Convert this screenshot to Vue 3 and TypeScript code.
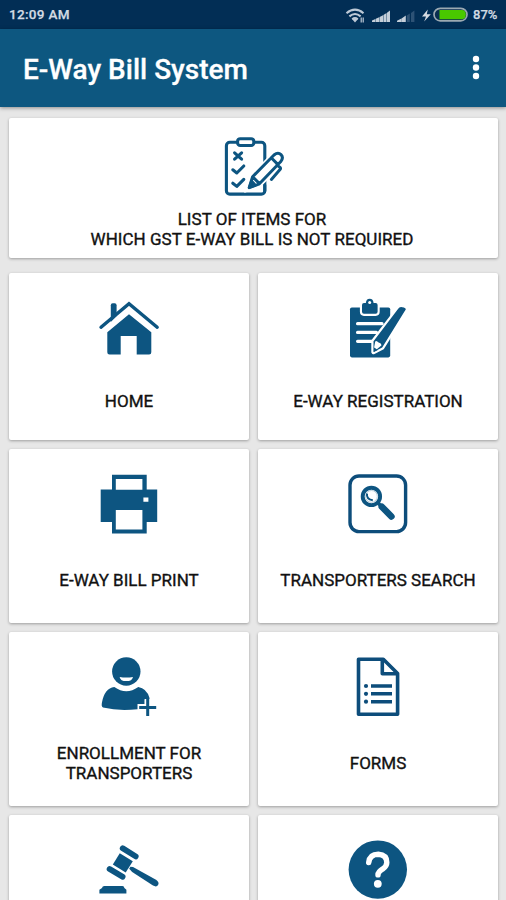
<script setup lang="ts">
type IconName = 'home' | 'register' | 'print' | 'search' | 'enroll' | 'forms' | 'gavel' | 'help'
interface Tile { icon: IconName; lines: string[] }

const tiles: Tile[] = [
  { icon: 'home', lines: ['HOME'] },
  { icon: 'register', lines: ['E-WAY REGISTRATION'] },
  { icon: 'print', lines: ['E-WAY BILL PRINT'] },
  { icon: 'search', lines: ['TRANSPORTERS SEARCH'] },
  { icon: 'enroll', lines: ['ENROLLMENT FOR', 'TRANSPORTERS'] },
  { icon: 'forms', lines: ['FORMS'] },
  { icon: 'gavel', lines: [] },
  { icon: 'help', lines: [] },
]
</script>

<template>
  <div class="screen">
    <div class="status">
      <span class="time">12:09 AM</span>
      <svg class="signals" width="126" height="18" viewBox="0 0 126 18">
        <g fill="none" stroke="#bdc9d6" stroke-width="2.1">
          <path d="M1.5 7.2Q10 .2 18.5 7.2M4.4 10.4Q10 5.6 15.6 10.4M7.2 13.3Q10 11 12.8 13.3" />
        </g>
        <path d="M7.2 13.2L10 16.4l2.8-3.2Q10 11.6 7.2 13.2zM15.6 11.5h1.2v5h-1.2zM17.6 11.5h1.2v5h-1.2z" fill="#bdc9d6" />
        <path d="M27 16v-1.6l3.4-1.4V16zM30.8 16v-3.3l3.4-1.5V16zM34.6 16v-5l3.4-1.8V16zM38.4 16V9l3.2-2V16zM42 16V6.7L45 4.4V16z" fill="#c4ced9" />
        <path d="M52 16v-1.2l4.4-2.2V16zM56.6 16v-3.6l4.2-3V16z" fill="#c4ced9" />
        <path d="M61.8 16V9.4l3-1.8V16zM66 16V7l3.4-2.4V16z" fill="#2d5275" />
        <path d="M82.8 3.4L77 10.4h4l-1.8 5.2 6.6-7.4h-4z" fill="#d5dbe2" />
        <rect x="89" y="2.4" width="33" height="12.4" rx="6.2" fill="#082d50" stroke="#9ba9b2" stroke-width="1.7" />
        <path d="M94.5 4H117q3.8 0 3.8 4.6t-3.8 4.6H94.5z" fill="#49c900" />
      </svg>
      <span class="percent">87%</span>
    </div>

    <header class="appbar">
      <h1>E-Way Bill System</h1>
      <svg class="more" width="8" height="26" viewBox="0 0 8 26">
        <g fill="#fff"><circle cx="4" cy="4" r="3.2" /><circle cx="4" cy="12.5" r="3.2" /><circle cx="4" cy="21" r="3.2" /></g>
      </svg>
    </header>

    <main class="content">
      <section class="card banner">
        <svg class="icon banner-icon" viewBox="0 0 60 60">
          <g fill="none" stroke="#0d5581" stroke-width="3.1" stroke-linecap="round" stroke-linejoin="round">
            <rect x="2.4" y="5.3" width="38.4" height="51.8" rx="3.4" />
            <rect x="13.6" y="1.7" width="16.2" height="6.8" rx="2.6" fill="#fff" />
            <path d="M10.6 15.8l7 6.4m0-6.4l-7 6.4M8.8 32.8l4 3.2 7-7M8.8 46.2l4 3.2 7-7" />
          </g>
          <path d="M25 51l3.6-11L50 18q4-3.6 7.2-.4t-.2 7.2L35.6 47z" fill="#fff" stroke="#fff" stroke-width="6" />
          <g fill="none" stroke="#0d5581" stroke-width="3" stroke-linecap="round" stroke-linejoin="round">
            <path d="M25.2 50.7l3.4-11L50 18q4-3.4 7-.4t-.4 7.2L35.4 46.8zM28.8 40l6.4 6.4M47.2 20.8l6.6 6.6M53 28l3 2.4q1 1 0 2.2l-8.6 9.8M40.8 48v6" />
            <path d="M25.4 50.4l2.2-6 3.6 3.8z" fill="#0d5581" />
          </g>
        </svg>
        <p class="banner-label"><span>LIST OF ITEMS FOR</span><span>WHICH GST E-WAY BILL IS NOT REQUIRED</span></p>
      </section>

      <div class="grid">
        <section v-for="tile in tiles" :key="tile.icon" class="card tile">
          <svg v-if="tile.icon === 'home'" class="icon" viewBox="0 0 60 60">
            <path d="M11.8 24V7.2q0-1.9 1.9-1.9h2q1.9 0 1.9 1.9V18z" fill="#0d5581" />
            <path d="M2 29.2L30 5.6l28.2 23.6" fill="none" stroke="#0d5581" stroke-width="3.4" stroke-linecap="round" />
            <path d="M30 16.3L8.3 34.2v20q0 2.2 2.2 2.2h11.2V38h16v18.4h12.4q2.2 0 2.2-2.2v-20z" fill="#0d5581" />
          </svg>

          <svg v-else-if="tile.icon === 'register'" class="icon" viewBox="0 0 60 60">
            <rect x="2" y="9.4" width="40.2" height="50" rx="1.8" fill="#0d5581" />
            <path d="M14 7q0-2 2-2h1.8q.4-4.3 3.9-4.3T25.6 5h2q2 0 2 2v6.8q0 2-2 2H16q-2 0-2-2z" fill="#0d5581" stroke="#fff" stroke-width="4.2" paint-order="stroke" />
            <circle cx="21.7" cy="4.6" r="1.5" fill="#fff" />
            <path d="M9.6 25.7H34M9.6 34.4h18.8M9.6 43.3h14" stroke="#fff" stroke-width="3.3" stroke-linecap="round" />
            <path d="M50.2 10.8l1.2-1.4q1.5-1 4.5.2t1.2 3L34.2 49.6 25.5 54V43.2z" fill="#0d5581" stroke="#fff" stroke-width="4.4" stroke-linejoin="round" paint-order="stroke" />
            <path d="M27.2 43.4q1.4-1.2 3.4 1.2 2.8.5 2.8 3l-6.8 5.4-.8-2z" fill="#fff" />
            <path d="M25.8 49.2v4.7l4.1-1.8z" fill="#0d5581" />
          </svg>

          <svg v-else-if="tile.icon === 'print'" class="icon" viewBox="0 0 60 60">
            <path d="M13 .8h34.7v14.7h10.5V48H47.7v11.4H13V48H1.7V15.5H13z" fill="#0d5581" />
            <path d="M16.8 5h26.6v10.7H16.8zM16.8 36h26.6v19.4H16.8zM44.4 23.4h5v4.4h-5z" fill="#fff" />
          </svg>

          <svg v-else-if="tile.icon === 'search'" class="icon" viewBox="0 0 60 60">
            <rect x="2" y="2" width="55.6" height="55.6" rx="9" fill="none" stroke="#0d4d7b" stroke-width="3.4" />
            <path d="M29.5 28.6l14.3 14" stroke="#0d5581" stroke-width="3.5" />
            <path d="M33.8 32.7l9.6 9.8" stroke="#0d5581" stroke-width="6.6" stroke-linecap="round" />
            <circle cx="23.4" cy="22.4" r="8.7" fill="#fff" stroke="#0d5581" stroke-width="3.9" />
            <circle cx="23.4" cy="22.4" r="5.9" fill="none" stroke="#9dbacc" stroke-width=".7" />
            <path d="M19 19.5q-.8 5.8 5.8 6.8" fill="none" stroke="#0d5581" stroke-width="2" />
          </svg>

          <svg v-else-if="tile.icon === 'enroll'" class="icon" viewBox="0 0 60 60">
            <circle cx="27.3" cy="14.5" r="14.2" fill="#0d5581" />
            <path d="M20.6 19.9q6.7 1 13.4 0-.8 4.2-6.7 4.2t-6.7-4.2z" fill="#fff" />
            <path d="M15.3 30q12 8.4 24 0 8.3 1.2 11.2 11v1.3h-5v4.8h-7v5.1Q19.8 54.4 4 50.5q-2-.7-1-5.2Q5.5 31.5 15.3 30z" fill="#0d5581" />
            <path d="M48.7 42v16.9M40.2 50.4h17" stroke="#fff" stroke-width="5.6" />
            <path d="M48.7 42v16.9M40.2 50.4h17" stroke="#0d5581" stroke-width="3" />
          </svg>

          <svg v-else-if="tile.icon === 'forms'" class="icon" viewBox="0 0 60 60">
            <g fill="none" stroke="#0d4d7b" stroke-width="3.6" stroke-linejoin="round">
              <path d="M10.5 2.3h24.8l14.3 14.2v40.8H10.5z" /><path d="M34.3 3v13.7h14.4" />
            </g>
            <path d="M23 29h21M23 36.8h21M23 44.7h21" stroke="#0d4d7b" stroke-width="3.4" />
            <g fill="#0d4d7b"><circle cx="18" cy="29" r="2.1" /><circle cx="18" cy="36.8" r="2.1" /><circle cx="18" cy="44.7" r="2.1" /></g>
          </svg>

          <svg v-else-if="tile.icon === 'gavel'" class="icon" viewBox="0 0 60 60">
            <path d="M23.7 8.3L36.7 16.4M10.6 29l13 7.8" stroke="#0d5581" stroke-width="5.8" stroke-linecap="round" />
            <path d="M20.8 13.3L33.8 21.2 26.7 32.5 13.8 24.5z" fill="#0d5581" />
            <path d="M31.4 26.7L34 27l23 12.8q3.5 2.4 2.2 5-1.5 2.7-5.2.8L33.2 32l-3-3.2z" fill="#0d5581" />
            <path d="M5.4 46h18q1.8 0 2 2l2 1.8v3.8H.4v-3.8l2.6-1.8q.4-2 2.4-2z" fill="#0d5581" />
          </svg>

          <svg v-else class="icon" viewBox="0 0 60 60">
            <circle cx="29.8" cy="29.6" r="29.2" fill="#0d5581" />
            <path d="M20.7 22.6q1-8.3 9.6-8.3 8.5.6 8.5 8.2 0 3.7-4 6.4-4.8 2.9-4.8 6" fill="none" stroke="#fff" stroke-width="5.4" stroke-linecap="round" />
            <circle cx="29.8" cy="43.8" r="3.9" fill="#fff" />
          </svg>

          <p class="label"><span v-for="line in tile.lines" :key="line">{{ line }}</span></p>
        </section>
      </div>
    </main>
  </div>
</template>

<style>
body { background: #e7e7e7; overflow: hidden; }
</style>

<style scoped>
.screen { width: 506px; height: 900px; overflow: hidden; background: #e7e7e7; font-family: Roboto, "Liberation Sans", sans-serif; }
.status { height: 29px; box-sizing: border-box; background: #022e55; display: flex; align-items: center; padding: 0 8px 0 9px; color: #d3dbe3; font-weight: 500; -webkit-text-stroke: .25px #d3dbe3; }
.time { font-size: 13.5px; letter-spacing: .3px; flex: 1; white-space: nowrap; line-height: 29px; }
.signals { flex: none; margin-right: 2px; }
.percent { font-size: 13px; width: 25px; white-space: nowrap; line-height: 29px; }
.appbar { height: 78px; box-sizing: border-box; background: #0d5780; display: flex; align-items: center; justify-content: space-between; padding: 3px 26px 0 23px; position: relative; box-shadow: 0 1px 4px rgba(0, 0, 0, .4); }
h1 { margin: 0; color: #fff; font-size: 28px; font-weight: 500; line-height: 34px; white-space: nowrap; -webkit-text-stroke: .3px #fff; }
.more { margin-top: -4px; }
.content { padding: 11px 8px 0 9px; }
.card { background: #fff; border-radius: 2px; box-shadow: 0 1px 3px rgba(0, 0, 0, .32); display: flex; flex-direction: column; align-items: center; min-width: 0; }
.icon { width: 60px; height: 60px; flex: none; overflow: visible; }
.banner { height: 140px; box-sizing: border-box; padding: 19px 3px 0 0; }
.banner-icon { margin-left: 3px; }
p { margin: 0; color: #111; font-size: 17px; line-height: 20px; font-weight: 400; -webkit-text-stroke: .35px #111; white-space: nowrap; text-align: center; }
p span { display: block; }
.banner-label { margin-top: 12px; letter-spacing: .03px; }
.grid { display: grid; grid-template-columns: 240px 240px; grid-template-rows: 167px 174px 174px 174px; gap: 9px; margin-top: 15px; }
.tile { padding-top: 25px; box-sizing: border-box; }
.label { flex: 1; display: flex; flex-direction: column; justify-content: center; padding-top: 3px; }
</style>
